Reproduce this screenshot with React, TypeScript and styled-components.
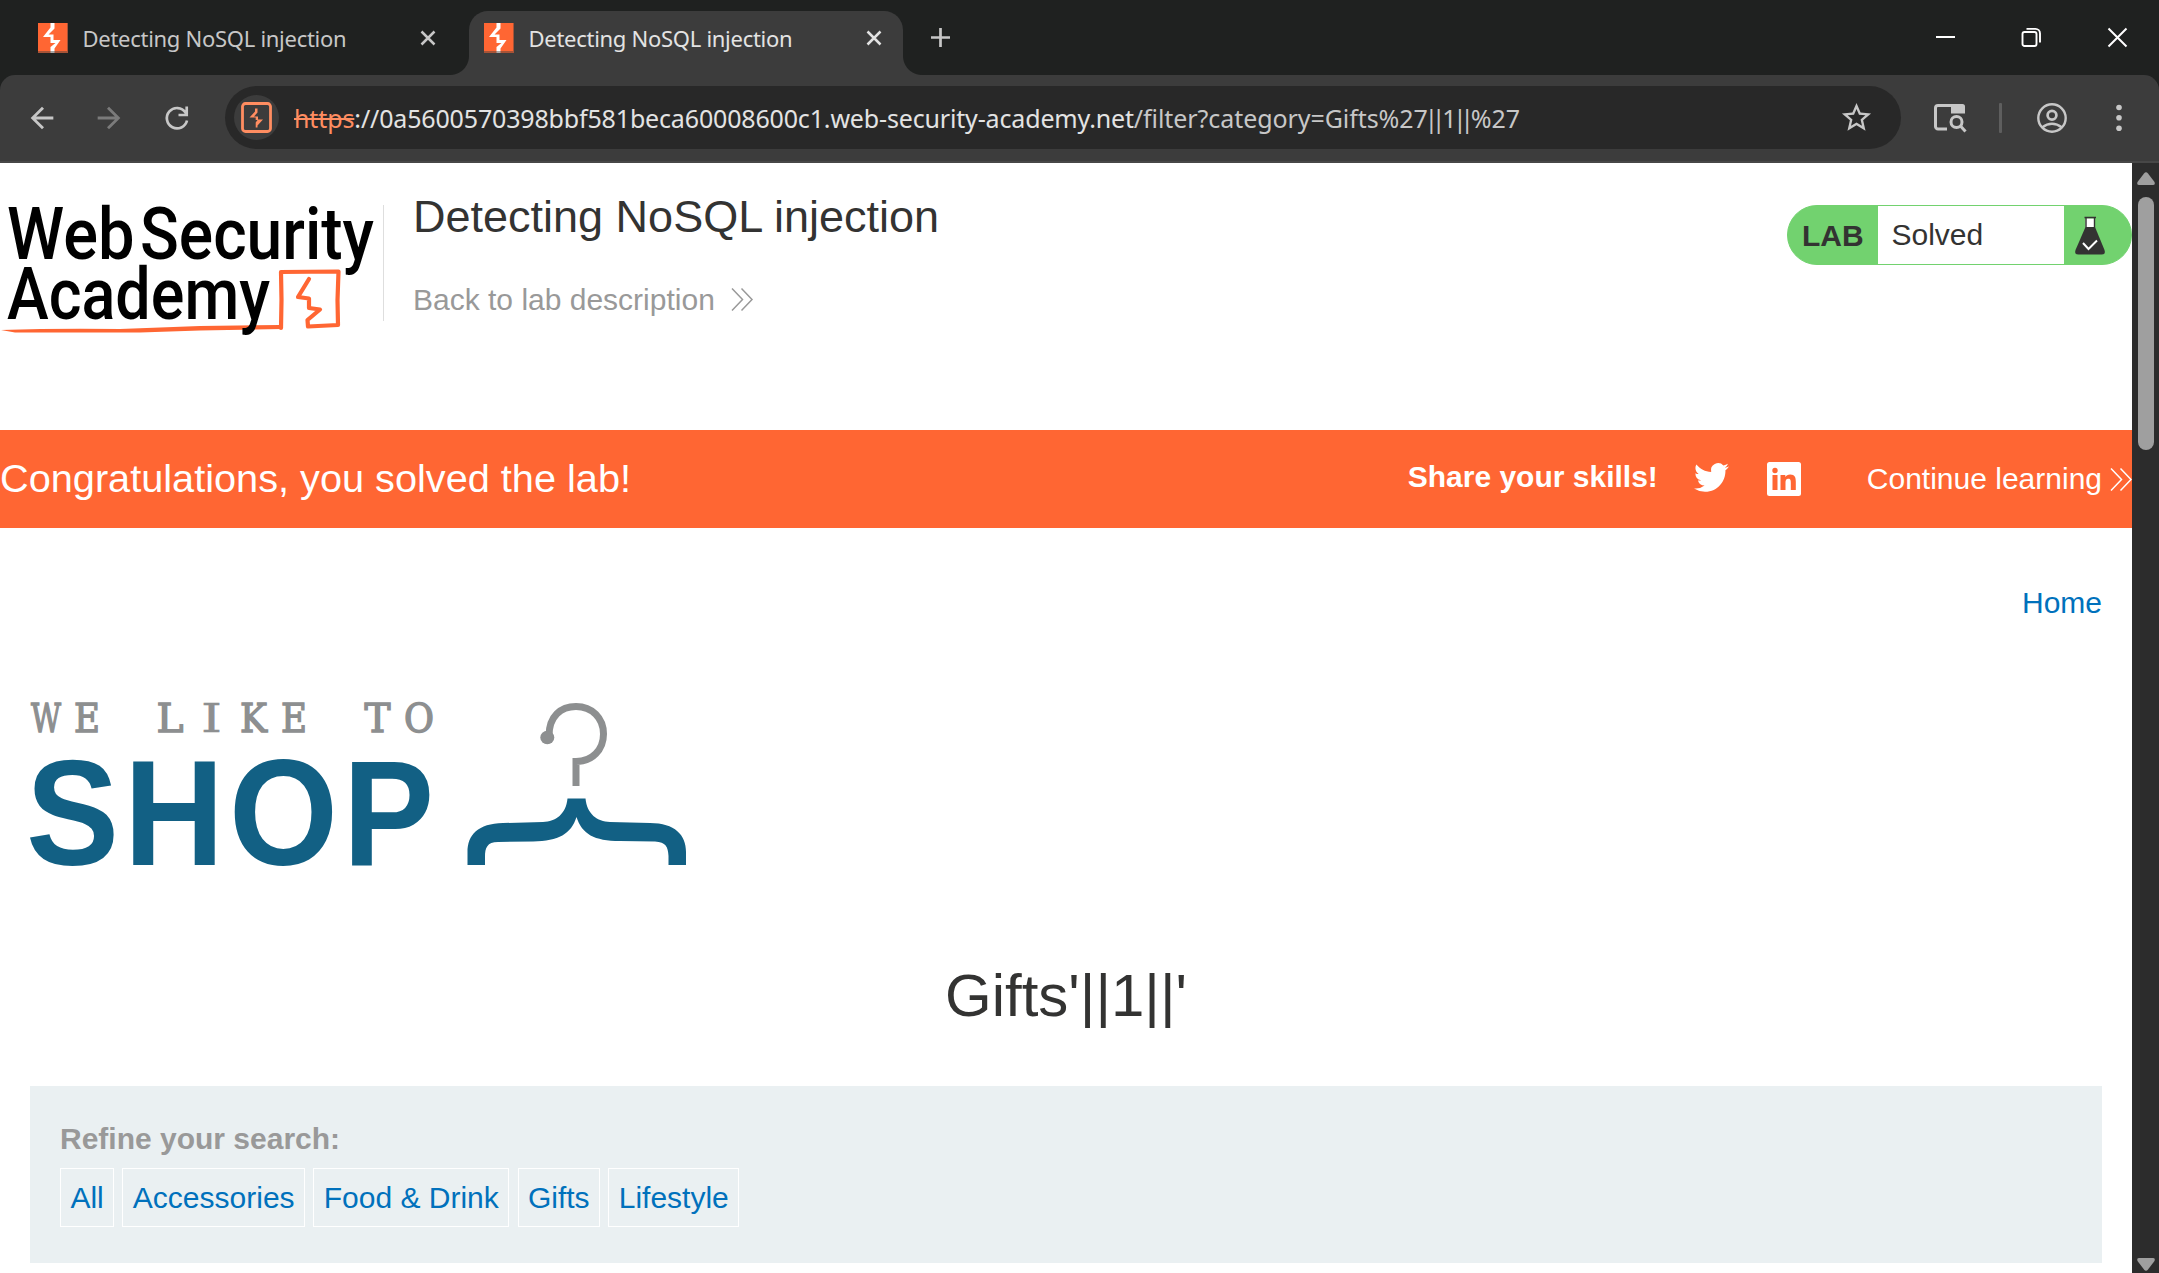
import React from "react";
import styled, { createGlobalStyle } from "styled-components";

const GlobalStyle = createGlobalStyle`
  *, *::before, *::after { box-sizing: border-box; }
  html, body { margin: 0; padding: 0; overflow: hidden; }
  body { background: #fff; font-family: "Liberation Sans", Arial, sans-serif; color: #333332; }
  svg { display: block; flex: none; overflow: visible; }
  a { text-decoration: none; color: inherit; }
  h1, h2, p { margin: 0; font-weight: 400; }
`;

const Window = styled.div`
  width: 2159px;
  height: 1273px;
  display: flex;
  flex-direction: column;
  overflow: hidden;
  background: #1f2120;
`;

/* ---------- browser chrome ---------- */

const TabStrip = styled.div`
  height: 75px;
  flex: none;
  display: flex;
  background: #1f2120;
  font-family: "Noto Sans", "Open Sans", sans-serif;
`;

const Tab = styled.div<{ $active?: boolean }>`
  position: relative;
  width: ${(p) => (p.$active ? 434 : 446)}px;
  height: 64px;
  margin: 11px 0 0 ${(p) => (p.$active ? 0 : 23)}px;
  padding: 0 0 0 15px;
  display: flex;
  align-items: flex-start;
  color: ${(p) => (p.$active ? "#e3e3e3" : "#c7c7c7")};
  background: ${(p) => (p.$active ? "#3c3c3c" : "transparent")};
  border-radius: 19px 19px 0 0;

  &::before, &::after {
    content: "";
    display: ${(p) => (p.$active ? "block" : "none")};
    position: absolute;
    bottom: 0;
    width: 19px;
    height: 19px;
  }
  &::before { left: -19px; background: radial-gradient(circle at 0 0, transparent 18.5px, #3c3c3c 19.5px); }
  &::after { right: -19px; background: radial-gradient(circle at 100% 0, transparent 18.5px, #3c3c3c 19.5px); }

  > svg { margin-top: 12px; }
`;

const TabTitle = styled.span`
  margin: 11px 0 0 14.5px;
  width: 337.5px;
  font-size: 22px;
  line-height: 32px;
  letter-spacing: -0.28px;
  white-space: nowrap;
`;

const TabClose = styled.span`
  margin-top: 19px;
`;

const NewTab = styled.span`
  margin: 27px 0 0 27px;
  color: #c7c7c7;
`;

const WindowControls = styled.div`
  margin: 27px 31px 0 auto;
  display: flex;
  gap: 65px;
  color: #fff;
`;

const ToolbarBack = styled.div`
  flex: none;
  background: #1f2120;
`;

const Toolbar = styled.div`
  height: 88px;
  background: #3c3c3c;
  border-bottom: 2px solid #474747;
  border-radius: 15px 15px 0 0;
  display: flex;
  align-items: flex-start;
  color: #c7c7c7;
`;

const NavButtons = styled.div`
  width: 225px;
  padding: 26px 0 0 25px;
  display: flex;
  gap: 33px;
  flex: none;
`;

const Omnibox = styled.div`
  width: 1676px;
  height: 63px;
  margin-top: 11px;
  padding: 0 27px 0 9px;
  border-radius: 32px;
  background: #282828;
  display: flex;
  align-items: center;
`;

const SiteBadge = styled.span`
  width: 45px;
  height: 45px;
  border-radius: 50%;
  background: #3c3c3c;
  display: grid;
  place-items: center;
`;

const Url = styled.span`
  flex: 1;
  margin-left: 15px;
  font-family: "Noto Sans", "Open Sans", sans-serif;
  font-size: 25px;
  line-height: 34px;
  letter-spacing: -0.07px;
  white-space: nowrap;
  color: #c7c7c7;
`;

const Scheme = styled.span`
  color: #ff8d61;
  letter-spacing: -0.1px;
  text-decoration: line-through;
  text-decoration-thickness: 2px;
`;

const Host = styled.span`
  color: #e3e3e3;
  letter-spacing: -0.16px;
`;

const Pipes = styled.span`
  margin: 0 3.3px 0 -3.3px;
  letter-spacing: -6.6px;
`;

const ToolbarActions = styled.div`
  margin-top: 26px;
  padding-left: 31px;
  display: flex;
  align-items: center;
  height: 34px;
`;

const Separator = styled.span`
  width: 3px;
  height: 30px;
  margin: 0 35px 0 33px;
  background: #5e5e5e;
  border-radius: 1px;
`;

const MenuSlot = styled.span`
  margin-left: 48px;
`;

/* ---------- page ---------- */

const Viewport = styled.div`
  flex: 1;
  min-height: 0;
  display: flex;
`;

const Page = styled.main`
  width: 2132px;
  background: #fff;
  overflow: hidden;
`;

const ScrollTrack = styled.div`
  width: 27px;
  background: #2c2c2c;
  display: flex;
  flex-direction: column;
  align-items: center;
  padding: 9px 0 2px;
`;

const ScrollThumb = styled.div`
  width: 16px;
  height: 253px;
  margin: 12px 0 auto;
  border-radius: 8px;
  background: #9f9f9f;
`;

const LabHeader = styled.header`
  height: 267px;
  padding-top: 27px;
  display: flex;
  align-items: flex-start;
`;

const HeaderRule = styled.span`
  width: 1px;
  height: 116px;
  margin-top: 15px;
  background: #dedede;
`;

const TitleBlock = styled.div`
  flex: 1;
  padding: 1px 0 0 29px;
`;

const LabTitle = styled.h2`
  font-size: 45px;
  line-height: 52px;
`;

const BackLink = styled.a`
  margin-top: 40px;
  display: flex;
  align-items: flex-start;
  gap: 16px;
  font-size: 30px;
  line-height: 34px;
  color: #999;

  svg { margin-top: 5px; }
`;

const LabStatus = styled.div`
  width: 345px;
  height: 60px;
  margin-top: 15px;
  border: 1px solid #72d26f;
  border-radius: 30px;
  background: #72d26f;
  display: flex;
  font-size: 30px;
  line-height: 58px;
`;

const LabTag = styled.span`
  width: 90px;
  padding-left: 14px;
  font-weight: 700;
  line-height: 60px;
`;

const LabState = styled.span`
  width: 186px;
  padding-left: 13.5px;
  background: #fff;
`;

const FlaskSlot = styled.span`
  padding: 10px 0 0 11px;
`;

const Banner = styled.section`
  height: 98px;
  background: #ff6633;
  color: #fff;
  display: flex;
  align-items: flex-start;
  font-size: 30px;
  line-height: 34px;
`;

const BannerText = styled.p`
  flex: 1;
  margin-top: 25px;
  font-size: 39.7px;
  line-height: 47px;
`;

const ShareText = styled.span`
  margin: 30px 36px 0 0;
  font-weight: 700;
`;

const ShareIcons = styled.span`
  display: flex;
  gap: 38px;
  margin-top: 32px;
`;

const ContinueLink = styled.a`
  display: flex;
  gap: 8px;
  margin: 32px 0 0 66px;

  svg { margin-top: 6px; }
`;

const Content = styled.section`
  padding: 57px 30px 0;
`;

const HomeNav = styled.nav`
  display: flex;
  justify-content: flex-end;
  font-size: 30px;
  line-height: 35px;
  color: #0071bc;
`;

const ShopLogoBox = styled.div`
  margin-top: 82px;
`;

const CategoryTitle = styled.h1`
  margin-top: 91px;
  font-size: 60px;
  line-height: 70px;
  text-align: center;
`;

const Filters = styled.section`
  margin-top: 55px;
  height: 177px;
  padding: 36px 30px 0;
  background: #eaf0f2;
`;

const FilterLabel = styled.p`
  font-size: 30px;
  line-height: 34px;
  font-weight: 700;
  color: #999;
`;

const FilterRow = styled.div`
  margin-top: 12px;
  display: flex;
  gap: 8.4px;
`;

const FilterLink = styled.a`
  height: 59px;
  padding: 0 9.375px;
  border: 1px solid #fff;
  font-size: 30px;
  line-height: 58px;
  color: #0071bc;
`;

/* ---------- drawings ---------- */

const Favicon = () => (
  <svg width="30" height="30" viewBox="0 0 30 30">
    <rect width="30" height="30" fill="#ff6633" />
    <path d="M12.500 0h4v5.500l-6 6h5V17h7l-6 8.500V30h-4v-6l5-4h-5v-6H5l7.500-9.500z" fill="#fff" />
    <path d="M0 28h30v2H0zM29 0h1v28h-1z" fill="#3c3c3c" opacity=".45" />
  </svg>
);

const CloseX = () => (
  <svg width="16" height="16" viewBox="0 0 16 16" fill="none" stroke="currentColor" strokeWidth="2.500">
    <path d="M1.500 1.500l13 13M14.500 1.500l-13 13" />
  </svg>
);

const Chevrons = () => (
  <svg width="22" height="23" viewBox="0 0 22 23" fill="none" stroke="currentColor" strokeWidth="1.500">
    <path d="M1 .5l10.500 11L1 22.500M10.500 .5L21 11.500l-10.500 11" />
  </svg>
);

const BackArrow = ({ color, flip }: { color: string; flip?: boolean }) => (
  <svg width="34" height="34" viewBox="0 0 24 24" fill={color}>
    <path
      transform={flip ? "translate(24 0) scale(-1 1)" : undefined}
      d="M20 11H7.830l5.590-5.590L12 4l-8 8 8 8 1.410-1.410L7.830 13H20z"
    />
  </svg>
);

const Reload = () => (
  <svg width="34" height="34" viewBox="0 0 34 34" fill="none" stroke="currentColor" strokeWidth="2.700">
    <path d="M28 19.500A10.200 10.200 0 1 1 26.500 11.500L28 14M27.700 5.500V14H19.500" />
  </svg>
);

const WsaLogo = () => (
  <svg width="383" height="150" viewBox="0 190 383 150">
    <path d="M1 330Q60 328 120 329L200 326 280 325 282 329 200 330.500 140 332.500 15 332.500Z" fill="#ff6633" />
    <path
      d="M281 328L281.500 300 281 272 338.500 271.500 337.500 300 338 325 308 326.500 307.500 320 320 309.500 309 308 309 298.500 298 297 309 279"
      fill="none"
      stroke="#ff6633"
      strokeWidth="4.200"
      strokeLinejoin="round"
      strokeLinecap="round"
    />
    <g fontFamily="Roboto, sans-serif" fontWeight="500" fontSize="71.500" fill="#000">
      <text x="7" y="259" textLength="127.500" lengthAdjust="spacingAndGlyphs">Web</text>
      <text x="140" y="259" textLength="234" lengthAdjust="spacingAndGlyphs">Security</text>
      <text x="7" y="319" textLength="263" lengthAdjust="spacingAndGlyphs">Academy</text>
    </g>
  </svg>
);

const Flask = () => (
  <svg width="30" height="40" viewBox="0 0 30 40">
    <path d="M10.500 2.500h9.500v9h-9.500z" fill="#fff" />
    <path d="M9.500 1.500h11.500M11 2v9.500M19.500 2v9.500" stroke="#333332" strokeWidth="1.400" />
    <path d="M10.500 11h9.500L29.500 34q1.500 4.500-3 4.500H3.500q-4.500 0-3-4.500z" fill="#333332" />
    <path d="M8 27l5.500 6L22 24.500" fill="none" stroke="#fff" strokeWidth="2" />
  </svg>
);

const Twitter = () => (
  <svg width="35" height="33" viewBox="0 1.500 24 22.500" preserveAspectRatio="none" fill="#fff">
    <path d="M23.953 4.570a10 10 0 0 1-2.825.775 4.958 4.958 0 0 0 2.163-2.723c-.951.555-2.005.959-3.127 1.184a4.920 4.920 0 0 0-8.384 4.482C7.690 8.095 4.067 6.130 1.640 3.162a4.822 4.822 0 0 0-.666 2.475c0 1.710.870 3.213 2.188 4.096a4.904 4.904 0 0 1-2.228-.616v.060a4.923 4.923 0 0 0 3.946 4.827 4.996 4.996 0 0 1-2.212.085 4.936 4.936 0 0 0 4.604 3.417 9.867 9.867 0 0 1-6.102 2.105c-.390 0-.779-.023-1.170-.067a13.995 13.995 0 0 0 7.557 2.209c9.053 0 13.998-7.496 13.998-13.985 0-.210 0-.420-.015-.630A9.935 9.935 0 0 0 24 4.590z" />
  </svg>
);

const LinkedIn = () => (
  <svg width="34" height="34" viewBox="0 0 34 34">
    <rect width="34" height="34" rx="2.500" fill="#fff" />
    <path
      d="M5.500 13h5v15h-5zM8 5.800a2.700 2.700 0 1 1 0 5.400 2.700 2.700 0 0 1 0-5.400zM13.500 13h4.800v2.100c.9-1.500 2.600-2.500 4.900-2.500 4.700 0 5.600 3.100 5.600 7.200V28h-5v-7.300c0-1.900-.1-4-2.500-4s-2.800 1.900-2.800 3.900V28h-5z"
      fill="#ff6633"
    />
  </svg>
);

const taglineLetters: [string, number, number, number][] = [
  ["W", 31, 30, 1.4], ["E", 74, 26, 1.4], ["L", 156.5, 27, 1.4], ["I", 201, 21, 0.4],
  ["K", 240, 27, 1.4], ["E", 281, 26, 1.4], ["T", 364.5, 26, 1.4], ["O", 404, 30, 1.4],
];

const shopLetters: [string, number, number][] = [
  ["S", 26, 93], ["H", 124, 100], ["O", 229, 109], ["P", 343, 91],
];

const ShopLogo = () => (
  <svg width="660" height="168" viewBox="30 702 660 168">
    <g fontFamily='"DejaVu Serif", serif' fontSize="38.500" fill="#8d8f90" stroke="#8d8f90">
      {taglineLetters.map(([ch, x, w, weight]) => (
        <text key={x} x={x} y="732" strokeWidth={weight} textLength={w} lengthAdjust="spacingAndGlyphs">{ch}</text>
      ))}
    </g>
    <g fontFamily='"Liberation Sans", Arial, sans-serif' fontWeight="700" fontSize="151" fill="#126084">
      {shopLetters.map(([ch, x, w]) => (
        <text key={ch} x={x} y="865" textLength={w} lengthAdjust="spacingAndGlyphs">{ch}</text>
      ))}
    </g>
    <path d="M549 736C549 716 561 706.500 576 706.500C592 706.500 603.500 718 603.500 734C603.500 750 592 761.500 576 761.500V786" fill="none" stroke="#8d8f90" strokeWidth="7" />
    <ellipse cx="547.300" cy="737.500" rx="7" ry="6.800" fill="#8d8f90" />
    <path
      d="M567.500 798.500H585.500C587 814 597 821.500 610 822L650 823C675 823 686 835 686 852V865H668.500V856C668 847 666 842 655 841.500L620 841C594 841 582 834 576.500 817C571 834 559 841 533 841.500L498 842C487 842 485 848 485 857V865H467.500V852C467.500 835 478 823.500 503 823L543 822C556 821.500 566 814 567.500 798.500Z"
      fill="#126084"
    />
  </svg>
);

const categories = ["All", "Accessories", "Food & Drink", "Gifts", "Lifestyle"];

export default function App() {
  return (
    <Window>
      <GlobalStyle />
      <TabStrip>
        <Tab>
          <Favicon />
          <TabTitle>Detecting NoSQL injection</TabTitle>
          <TabClose><CloseX /></TabClose>
        </Tab>
        <Tab $active>
          <Favicon />
          <TabTitle>Detecting NoSQL injection</TabTitle>
          <TabClose><CloseX /></TabClose>
        </Tab>
        <NewTab>
          <svg width="21" height="21" viewBox="0 0 21 21" stroke="currentColor" strokeWidth="2.700">
            <path d="M10.500 1v19M1 10.500h19" />
          </svg>
        </NewTab>
        <WindowControls>
          <svg width="21" height="21" viewBox="0 0 21 21"><path d="M1 9h19v2H1z" fill="currentColor" /></svg>
          <svg width="21" height="21" viewBox="0 0 21 21" fill="none" stroke="currentColor" strokeWidth="1.900">
            <rect x="1.500" y="5" width="14" height="14" rx="2" />
            <path d="M5.500 1.900h9a4.500 4.500 0 0 1 4.500 4.500v9.200" />
          </svg>
          <svg width="21" height="21" viewBox="0 0 21 21" stroke="currentColor" strokeWidth="2">
            <path d="M1.500 1.500l18 18M19.500 1.500l-18 18" />
          </svg>
        </WindowControls>
      </TabStrip>

      <ToolbarBack>
        <Toolbar>
          <NavButtons>
            <BackArrow color="#c7c7c7" />
            <BackArrow color="#7b7b7b" flip />
            <Reload />
          </NavButtons>
          <Omnibox>
            <SiteBadge>
              <svg width="31" height="31" viewBox="0 0 31 31">
                <rect x="1.500" y="1.500" width="28" height="28" rx="3" fill="none" stroke="#ff8d61" strokeWidth="2.800" />
                <path d="M14 6.500h2.500v4l-3.500 4h4v3h5l-5.500 6v2h-1.800v-5l1.800-2.500h-1.800v-2.500H8.500l5.500-6z" fill="#ff8d61" />
              </svg>
            </SiteBadge>
            <Url>
              <Scheme>https</Scheme>
              <Host>://0a5600570398bbf581beca60008600c1.web-security-academy.net</Host>
              /filter?category=Gifts%27<Pipes>||</Pipes>1<Pipes>||</Pipes>%27
            </Url>
            <svg width="35" height="35" viewBox="0 0 24 24" fill="#c7c7c7">
              <path d="M22 9.240l-7.190-.620L12 2 9.190 8.630 2 9.240l5.460 4.730L5.820 21 12 17.270 18.180 21l-1.630-7.030zM12 15.400l-3.760 2.270 1-4.280-3.320-2.880 4.380-.380L12 6.100l1.710 4.040 4.380.380-3.320 2.880 1 4.280z" />
            </svg>
          </Omnibox>
          <ToolbarActions>
            <svg width="34" height="30" viewBox="0 0 34 30" fill="none" stroke="currentColor">
              <path d="M15 26H6a2.500 2.500 0 0 1-2.500-2.500V5A2.500 2.500 0 0 1 6 2.500h15" strokeWidth="3" />
              <path d="M19 1h11.500a2.500 2.500 0 0 1 2.500 2.500v7H19z" fill="currentColor" stroke="none" />
              <circle cx="24.500" cy="19" r="5.500" strokeWidth="3" />
              <path d="M28.500 23l5 5.500" strokeWidth="3" />
            </svg>
            <Separator />
            <svg width="30" height="30" viewBox="0 0 30 30" fill="none" stroke="currentColor" strokeWidth="2.400">
              <circle cx="15" cy="15" r="13.700" />
              <circle cx="15" cy="12.300" r="4.400" strokeWidth="2.700" />
              <path d="M5 24.500q10-7.500 20 0" />
            </svg>
            <MenuSlot>
              <svg width="8" height="30" viewBox="0 0 8 30" fill="currentColor">
                <circle cx="4" cy="4.500" r="2.800" /><circle cx="4" cy="14.800" r="2.800" /><circle cx="4" cy="25.200" r="2.800" />
              </svg>
            </MenuSlot>
          </ToolbarActions>
        </Toolbar>
      </ToolbarBack>

      <Viewport>
        <Page>
          <LabHeader>
            <WsaLogo />
            <HeaderRule />
            <TitleBlock>
              <LabTitle>Detecting NoSQL injection</LabTitle>
              <BackLink href="#">Back to lab description<Chevrons /></BackLink>
            </TitleBlock>
            <LabStatus>
              <LabTag>LAB</LabTag>
              <LabState>Solved</LabState>
              <FlaskSlot><Flask /></FlaskSlot>
            </LabStatus>
          </LabHeader>

          <Banner>
            <BannerText>Congratulations, you solved the lab!</BannerText>
            <ShareText>Share your skills!</ShareText>
            <ShareIcons><Twitter /><LinkedIn /></ShareIcons>
            <ContinueLink href="#">Continue learning<Chevrons /></ContinueLink>
          </Banner>

          <Content>
            <HomeNav><a href="#">Home</a></HomeNav>
            <ShopLogoBox><ShopLogo /></ShopLogoBox>
            <CategoryTitle>Gifts'||1||'</CategoryTitle>
            <Filters>
              <FilterLabel>Refine your search:</FilterLabel>
              <FilterRow>
                {categories.map((c) => <FilterLink key={c} href="#">{c}</FilterLink>)}
              </FilterRow>
            </Filters>
          </Content>
        </Page>
        <ScrollTrack>
          <svg width="18" height="13" viewBox="0 0 18 13" fill="#9f9f9f"><path d="M7 1.500q2-2.500 4 0l6.500 8.500q1 3-1.500 3H2q-2.500 0-1.500-3z" /></svg>
          <ScrollThumb />
          <svg width="18" height="13" viewBox="0 0 18 13" fill="#9f9f9f"><path d="M7 11.500q2 2.500 4 0L17.500 3q1-3-1.500-3H2Q-.5 0 .5 3z" /></svg>
        </ScrollTrack>
      </Viewport>
    </Window>
  );
}
